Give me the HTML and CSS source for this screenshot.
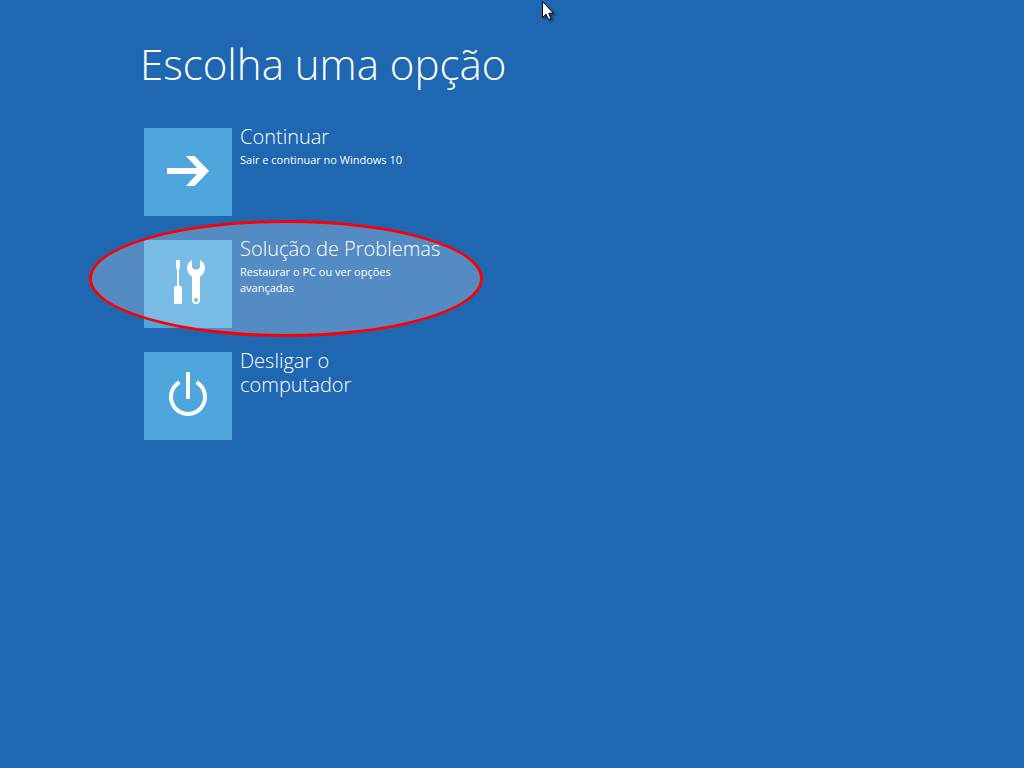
FILE: index.html
```html
<!DOCTYPE html>
<html lang="pt-BR">
<head>
  <meta charset="UTF-8" />
  <meta name="viewport" content="width=device-width, initial-scale=1.0">
  <title>Escolha uma opção</title>
  <link rel="stylesheet" href="styles.css">
</head>
<body>
  <main class="container">
    <h1>Escolha uma opção</h1>

    <div class="opcoes">
      <button type="button" class="opcao">
        <span class="icone">
          <svg width="88" height="88" viewBox="0 0 88 88" aria-hidden="true">
            <path fill="#fff" d="M23 40H53L42 28H50.500L65 43L50.500 58H42L53 46H23Z" />
          </svg>
        </span>
        <span class="texto">
          <span class="titulo">Continuar</span>
          <span class="descricao">Sair e continuar no Windows 10</span>
        </span>
      </button>

      <button type="button" class="opcao">
        <span class="icone">
          <svg width="88" height="88" viewBox="0 0 88 88" aria-hidden="true">
            <path fill="#fff" d="M32 20H36V27L35 30V46H36.500Q38 46 38 47.500V62.500Q38 64 36.500 64H31.500Q30 64 30 62.500V47.500Q30 46 31.500 46H33V30L32 27Z" />
            <path fill="#fff" fill-rule="evenodd" d="M48 20V27L50 29.500H54L56 27V20C59 21.500 61 24.500 61 28C61 31.500 59 35 56 36.500V60A4 4 0 0 1 48 60V36.500C45 35 43 31.500 43 28C43 24.500 45 21.500 48 20ZM52 58A2 2 0 1 0 52 62A2 2 0 1 0 52 58Z" />
          </svg>
        </span>
        <span class="texto">
          <span class="titulo">Solução de Problemas</span>
          <span class="descricao">Restaurar o PC ou ver opções avançadas</span>
        </span>
        <span class="destaque"></span>
      </button>

      <button type="button" class="opcao">
        <span class="icone">
          <svg width="88" height="88" viewBox="0 0 88 88" aria-hidden="true">
            <path fill="none" stroke="#fff" stroke-width="4" d="M35.500 30.200A17 17 0 1 0 52.500 30.200" />
            <rect fill="#fff" x="42" y="20" width="4" height="27" rx="1" />
          </svg>
        </span>
        <span class="texto">
          <span class="titulo">Desligar o computador</span>
        </span>
      </button>
    </div>
  </main>

  <svg class="cursor" width="14" height="22" viewBox="0 0 14 22" aria-hidden="true">
    <path fill="#fff" stroke="#000" d="M1.500 1.500V17.500L5 14.200L7.500 19.500L10 18.500L7.800 13.200H12.500Z" />
  </svg>
</body>
</html>
```
FILE: styles.css
```css
* {
  box-sizing: border-box;
  margin: 0;
  padding: 0;
}

body {
  min-height: 100vh;
  font-family: 'Open Sans', 'Noto Sans', sans-serif;
  background-color: #1f67b1;
  color: #fff;
}

.container {
  padding: 32px 24px 32px 144px;
}

h1 {
  margin-left: -4px;
  font-size: 42px;
  font-weight: 300;
  line-height: 64px;
}

.opcoes {
  display: flex;
  flex-direction: column;
  align-items: flex-start;
  gap: 24px;
  margin-top: 32px;
}

.opcao {
  position: relative;
  display: flex;
  align-items: flex-start;
  gap: 8px;
  border: none;
  background: none;
  color: inherit;
  font-family: inherit;
  text-align: left;
  cursor: pointer;
}

.icone {
  flex: none;
  width: 88px;
  height: 88px;
  background-color: #4ea6dd;
}

.icone svg {
  display: block;
}

.texto {
  width: 203px;
}

.titulo {
  display: block;
  margin-top: -3px;
  font-size: 20px;
  font-weight: 300;
  line-height: 24px;
}

.descricao {
  display: block;
  margin-top: 3px;
  font-size: 11px;
  line-height: 16px;
}

/* Elipse de destaque sobre a opção */
.destaque {
  position: absolute;
  top: -20px;
  left: -55px;
  width: 394px;
  height: 117px;
  border: 3px solid #f00;
  border-radius: 50%;
  background-color: rgba(255, 255, 255, 0.24);
  pointer-events: none;
}

.cursor {
  position: absolute;
  top: 0;
  left: 541px;
  filter: drop-shadow(2px 2px 1px rgba(0, 0, 0, 0.4));
}
```
